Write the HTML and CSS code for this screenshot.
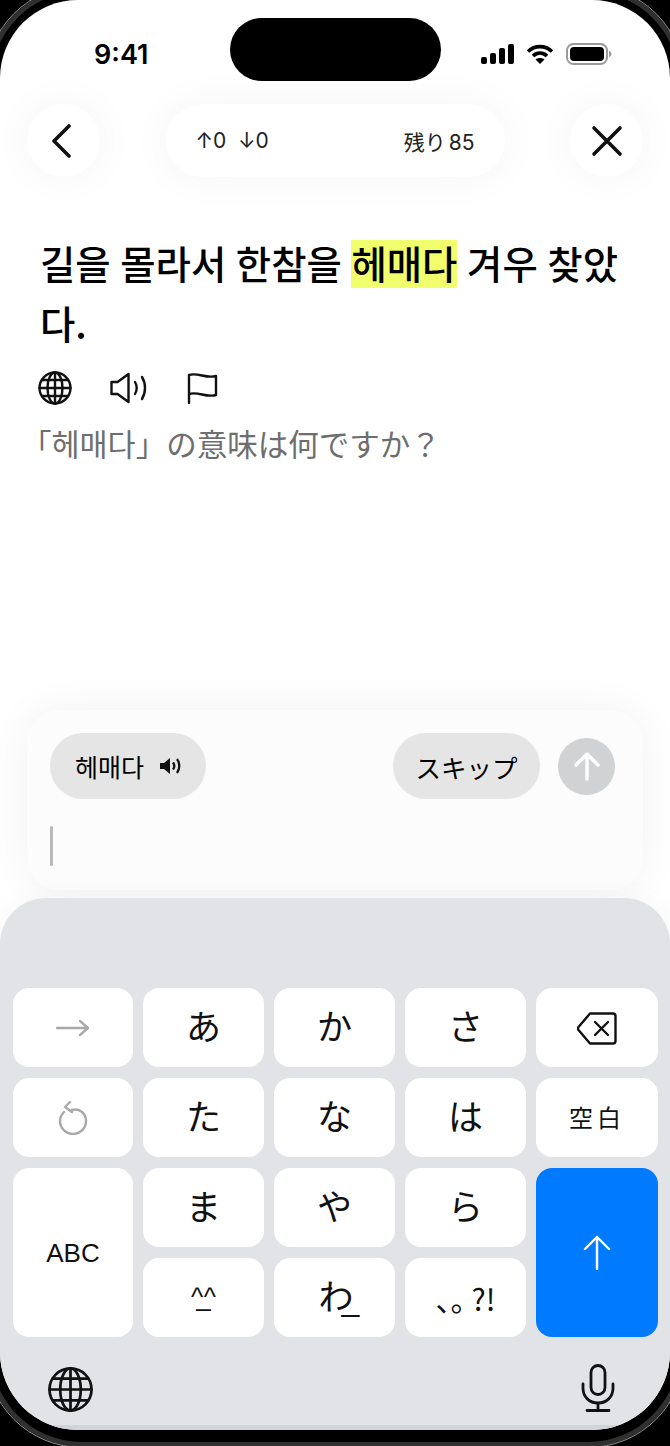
FILE: index.html
```html
<!DOCTYPE html>
<html lang="ja">
<head>
    <meta charset="UTF-8">
    <meta name="viewport" content="width=device-width, initial-scale=1.0">
    <title>헤매다</title>
    <link rel="stylesheet" href="styles.css">
</head>
<body>
    <div class="bezel"></div>
    <div class="screen">
        <div class="island"></div>
        <div class="status">
            <span class="time">9:41</span>
            <div class="status-icons">
                <svg width="34" height="22" viewBox="0 0 34 22"><rect x="1" y="14" width="6" height="7" rx="2"/><rect x="10" y="10" width="6" height="11" rx="2"/><rect x="19" y="5" width="6" height="16" rx="2"/><rect x="28" y="1" width="6" height="20" rx="2"/></svg>
                <svg width="28" height="22" viewBox="0 0 28 22"><path d="M2 8.500C9 2 19 2 26 8.500" class="wifi"/><path d="M7 13c4.200-3.800 9.800-3.800 14 0" class="wifi"/><path d="M14 21l-4.500-4.500c2.500-2 6.500-2 9 0z"/></svg>
                <svg width="46" height="22" viewBox="0 0 46 22"><rect x="1" y="1" width="40" height="20" rx="6.500" class="batt-outline"/><rect x="4" y="4" width="34" height="14" rx="4"/><path d="M43 8v6c1.500-.5 2.500-1.500 2.500-3S44.500 8.500 43 8z" class="batt-nub"/></svg>
            </div>
        </div>

        <div class="topbar">
            <button class="round-btn">
                <svg class="back-icon" width="24" height="34" viewBox="0 0 24 34"><path d="M20 2L5 17l15 15" class="line"/></svg>
            </button>
            <div class="progress-pill">
                <span>↑0&nbsp;&nbsp;↓0</span>
                <span class="remaining">残り 85</span>
            </div>
            <button class="round-btn">
                <svg width="32" height="32" viewBox="0 0 32 32"><path d="M3 3l26 26M29 3L3 29" class="line"/></svg>
            </button>
        </div>

        <main class="content">
            <p class="sentence">길을 몰라서 한참을 <mark class="hl">헤매다</mark> 겨우 찾았다.</p>
            <div class="tools">
                <svg class="tool-globe" width="34" height="34" viewBox="0 0 34 34"><circle cx="17" cy="17" r="15.500"/><ellipse cx="17" cy="17" rx="7.500" ry="15.500"/><path d="M17 1.500v31M1.500 17h31M4 9h26M4 25h26"/></svg>
                <svg class="tool-speaker" width="37" height="32" viewBox="0 0 37 32"><path d="M1.500 10v12h6l11 8V2l-11 8z"/><path d="M25 10c2 3.500 2 8.500 0 12M32 5c4 6.500 4 15.500 0 22"/></svg>
                <svg class="tool-flag" width="31" height="32" viewBox="0 0 31 32"><path d="M2 31V3c9-3 17 4 27 1v19c-10 3-18-4-27-1"/></svg>
            </div>
            <p class="question">「헤매다」の意味は何ですか？</p>
        </main>

        <section class="answer-card">
            <div class="answer-row">
                <button class="chip">
                    헤매다
                    <svg width="22" height="20" viewBox="0 0 22 20"><path d="M1 7v6h4l6 5V2L5 7z" class="fill"/><path d="M14 6.500c1.500 2 1.500 5 0 7M18 3c3 4 3 10 0 14" class="thin"/></svg>
                </button>
                <div class="answer-right">
                    <button class="chip chip-skip">スキップ</button>
                    <button class="send">
                        <svg width="26" height="30" viewBox="0 0 26 30"><path d="M13 28V3M2 14L13 3l11 11"/></svg>
                    </button>
                </div>
            </div>
            <div class="cursor"></div>
        </section>

        <section class="keyboard">
            <div class="keys">
                <div class="key key-muted"><svg width="34" height="16" viewBox="0 0 34 16"><path d="M1 8h31M24 1l8 7-8 7"/></svg></div>
                <div class="key kana">あ</div>
                <div class="key kana">か</div>
                <div class="key kana">さ</div>
                <div class="key key-delete"><svg width="40" height="33" viewBox="0 0 40 33"><path d="M13 1.500h23a2.500 2.500 0 0 1 2.500 2.500v25a2.500 2.500 0 0 1-2.500 2.500H13L1.500 18a2.500 2.500 0 0 1 0-3z"/><path d="M18 10l13 13M31 10L18 23"/></svg></div>
                <div class="key key-muted"><svg width="30" height="34" viewBox="0 0 30 34"><path d="M14 9c7-2 14 3 14 11a13 13 0 0 1-26 0c0-4 2-7 4-9M12 1L7 6l7 5"/></svg></div>
                <div class="key kana">た</div>
                <div class="key kana">な</div>
                <div class="key kana">は</div>
                <div class="key key-small">空白</div>
                <div class="key key-tall key-abc">ABC</div>
                <div class="key kana">ま</div>
                <div class="key kana">や</div>
                <div class="key kana">ら</div>
                <div class="key key-tall key-enter"><svg width="30" height="35" viewBox="0 0 30 35"><path d="M15 34V2M3 14L15 2l12 12"/></svg></div>
                <div class="key key-kao">^_^</div>
                <div class="key kana key-wa">わ<span class="wa-mark">_</span></div>
                <div class="key key-punct"><span>、。</span><span class="punct-latin">?!</span></div>
            </div>
            <div class="kb-bottom">
                <svg class="kb-globe" width="45" height="45" viewBox="0 0 46 46"><circle cx="23" cy="23" r="21.500"/><ellipse cx="23" cy="23" rx="10.500" ry="21.500"/><path d="M23 1.500v43M1.500 23h43M5 12h36M5 34h36"/></svg>
                <svg class="kb-mic" width="34" height="48" viewBox="0 0 34 48"><rect x="10" y="1.500" width="14" height="29" rx="7"/><path d="M2 20v4c0 9 6.500 15 15 15s15-6 15-15v-4M17 39v7M6 46.500h22"/></svg>
            </div>
        </section>
    </div>
</body>
</html>
```

FILE: styles.css
```css
* {
    box-sizing: border-box;
}

html, body {
    margin: 0;
    padding: 0;
    height: 1446px;
    overflow: hidden;
    background-color: #000;
}

body {
    position: relative;
    font-family: "Noto Sans CJK JP", "Noto Sans CJK KR", sans-serif;
    color: #000;
}

button {
    border: none;
    padding: 0;
    font: inherit;
    color: inherit;
}

/* phone frame, sits behind the screen */
.bezel {
    position: absolute;
    top: -15px;
    left: -15px;
    right: -15px;
    height: 1463px;
    border: 1.5px solid #8c8c8c;
    border-radius: 97px;
    box-shadow: inset 0 0 0 5px #303030;
}

.screen {
    position: relative;
    height: 1430px;
    background-color: #fff;
    border-radius: 78px;
    overflow: hidden;
}

.island {
    position: absolute;
    top: 18px;
    left: 230px;
    width: 211px;
    height: 63px;
    border-radius: 32px;
    background-color: #000;
}

.status {
    display: flex;
    justify-content: space-between;
    align-items: center;
    height: 104px;
    padding: 34px 58px 30px 94px;
}

.time {
    font-family: Inter, sans-serif;
    font-size: 27px;
    font-weight: 600;
}

.status-icons {
    display: flex;
    align-items: center;
    gap: 12px;
}

.wifi {
    fill: none;
    stroke: #000;
    stroke-width: 3.6;
}

.batt-outline {
    fill: none;
    stroke: #9a9a9a;
    stroke-width: 2;
}

.batt-nub {
    fill: #9a9a9a;
}

.topbar {
    display: flex;
    justify-content: space-between;
    height: 73px;
    padding: 0 27px;
}

.round-btn {
    display: flex;
    align-items: center;
    justify-content: center;
    width: 73px;
    height: 73px;
    border-radius: 50%;
    background-color: #fff;
    box-shadow: 0 0 45px rgba(0, 0, 0, 0.045);
}

.back-icon {
    margin-right: 6px;
}

.line {
    fill: none;
    stroke: #111;
    stroke-width: 3.6;
    stroke-linecap: round;
    stroke-linejoin: round;
}

.progress-pill {
    display: flex;
    justify-content: space-between;
    align-items: center;
    width: 339px;
    padding: 0 30px;
    border-radius: 37px;
    background-color: #fff;
    box-shadow: 0 0 45px rgba(0, 0, 0, 0.045);
    font-family: Inter, "Noto Sans CJK JP", sans-serif;
    font-size: 21px;
    color: #222;
}

.remaining {
    word-spacing: -3px;
}

.content {
    padding: 55px 30px 0 40px;
}

.sentence {
    margin: 0;
    font-family: "Noto Sans CJK KR", sans-serif;
    font-size: 38.4px;
    font-weight: 500;
    line-height: 60px;
    word-spacing: 1px;
}

.hl {
    display: inline-block;
    padding-bottom: 4px;
    line-height: 44px;
    background-color: #f0ff6b;
    color: #000;
}

.tools {
    display: flex;
    align-items: center;
    height: 36px;
    margin: 18px 0 0 -2px;
}

.tools svg {
    fill: none;
    stroke: #111;
    stroke-width: 2.4;
    stroke-linejoin: round;
    stroke-linecap: round;
}

.tool-speaker {
    margin-left: 38px;
}

.tool-flag {
    margin-left: 40px;
}

.question {
    margin: 16px 0 0 -19px;
    font-size: 30.5px;
    line-height: 42px;
    color: #6e6e6e;
}

.answer-card {
    position: absolute;
    top: 710px;
    left: 27px;
    width: 616px;
    height: 180px;
    padding: 23px 28px 0 23px;
    border-radius: 32px;
    background-color: #fcfcfc;
    box-shadow: 0 0 40px rgba(0, 0, 0, 0.06);
}

.answer-row {
    display: flex;
    justify-content: space-between;
    align-items: center;
}

.answer-right {
    display: flex;
    align-items: center;
    gap: 18px;
}

.chip {
    display: flex;
    align-items: center;
    justify-content: center;
    gap: 15px;
    width: 156px;
    height: 66px;
    border-radius: 33px;
    background-color: #e5e5e5;
    font-family: "Noto Sans CJK KR", sans-serif;
    font-size: 25px;
}

.chip-skip {
    width: 147px;
    font-family: "Noto Sans CJK JP", sans-serif;
    font-size: 25.5px;
}

.fill {
    fill: #111;
}

.thin {
    fill: none;
    stroke: #111;
    stroke-width: 2.3;
}

.send {
    display: flex;
    align-items: center;
    justify-content: center;
    width: 57px;
    height: 57px;
    border-radius: 50%;
    background-color: #d1d2d4;
}

.send svg {
    fill: none;
    stroke: #fff;
    stroke-width: 3.4;
    stroke-linecap: round;
    stroke-linejoin: round;
}

.cursor {
    width: 3px;
    height: 40px;
    margin-top: 27px;
    border-radius: 2px;
    background-color: #b9b9b9;
}

.keyboard {
    position: absolute;
    top: 898px;
    left: 0;
    right: 0;
    height: 532px;
    padding: 90px 12px 0 13px;
    border-radius: 46px 46px 0 0;
    background-color: #e2e3e7;
    border-bottom: 5px solid #d3d4d7;
    box-shadow: 0 0 30px rgba(0, 0, 0, 0.04);
}

.keys {
    display: grid;
    grid-template-columns: 120px 121px 121px 121px 122px;
    grid-auto-rows: 79px;
    gap: 11px 10px;
}

.key {
    display: flex;
    align-items: center;
    justify-content: center;
    border-radius: 16px;
    background-color: #fff;
    font-size: 35px;
    color: #111;
}

.kana {
    padding-bottom: 6px;
}

.key svg {
    fill: none;
    stroke: #111;
    stroke-width: 2.4;
    stroke-linecap: round;
    stroke-linejoin: round;
}

.key-delete svg {
    margin-top: 2px;
}

.key-muted svg {
    stroke: #a9a9a9;
}

.key-small {
    padding-bottom: 3px;
    font-size: 24px;
    letter-spacing: 4px;
}

.key-tall {
    grid-row: span 2;
}

.key-abc {
    padding-top: 2px;
    font-family: "Liberation Sans", sans-serif;
    font-size: 26px;
}

.key-enter {
    background-color: #007aff;
}

.key-enter svg {
    stroke: #fff;
}

.key-kao {
    padding-right: 7px;
    font-family: "Liberation Sans", sans-serif;
    font-size: 26px;
    letter-spacing: -7px;
}

.key-wa {
    padding-left: 3px;
}

.wa-mark {
    width: 0;
    font-family: "Liberation Sans", sans-serif;
    font-size: 32px;
    transform: translate(-12px, 6px);
}

.key-punct {
    font-size: 30px;
}

.punct-latin {
    margin-left: -9px;
}

.kb-bottom {
    display: flex;
    justify-content: space-between;
    align-items: center;
    padding: 27px 43px 0 35px;
}

.kb-bottom svg {
    fill: none;
    stroke: #111;
    stroke-width: 2.8;
    stroke-linecap: round;
}

.kb-globe {
    margin-top: 3px;
}
```
